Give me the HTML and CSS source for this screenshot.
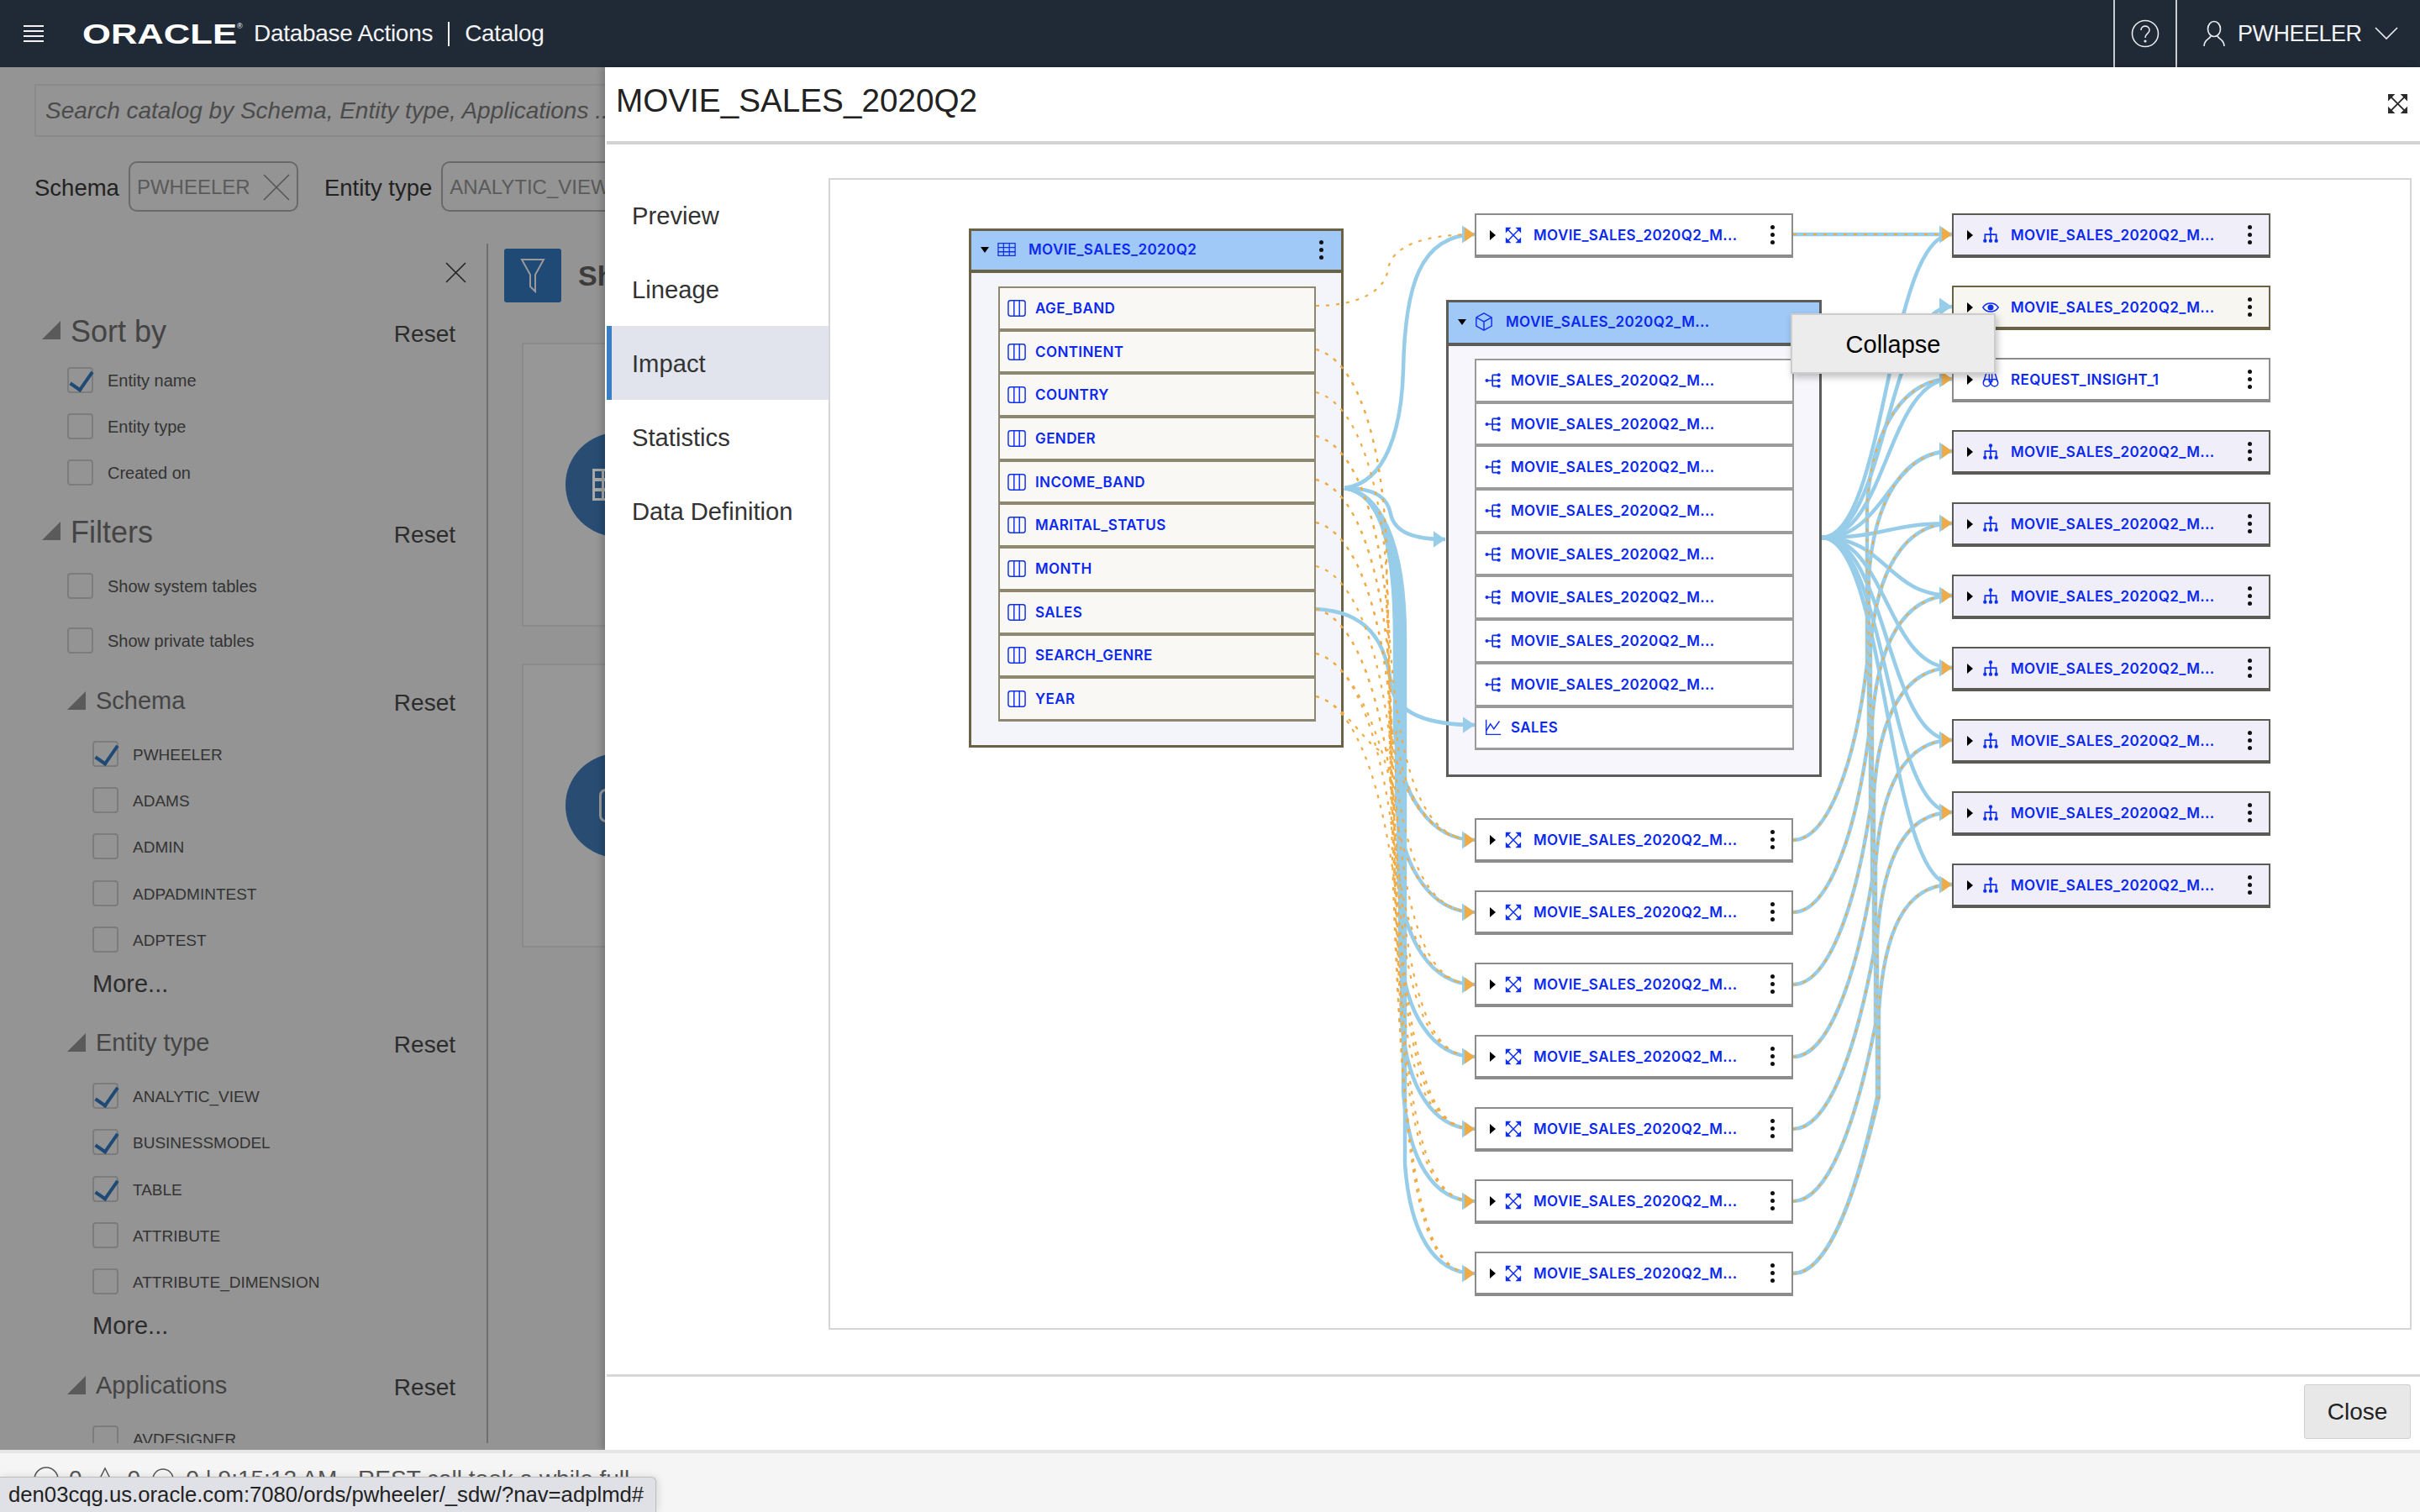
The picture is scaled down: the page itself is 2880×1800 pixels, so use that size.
FILE: index.html
```html
<!DOCTYPE html>
<html lang="en">
<head>
    <meta charset="UTF-8">
    <title>Database Actions | Catalog</title>
    <link rel="stylesheet" href="styles.css">
</head>
<body>
    <svg class="icon-defs" width="0" height="0">
        <symbol id="i-expand" viewBox="0 0 24 24">
            <path d="M4 4L20 20M20 4L4 20" fill="none" stroke="currentColor" stroke-width="1.8"/>
            <path d="M1 1h8L1 9zM23 1h-8l8 8zM1 23h8l-8-8zM23 23h-8l8-8z" fill="currentColor"/>
        </symbol>
        <symbol id="i-model" viewBox="0 0 24 24">
            <path d="M12 3V20M4 20V11H20V20" fill="none" stroke="currentColor" stroke-width="2"/>
            <circle cx="12" cy="3" r="2.6" fill="currentColor"/>
            <circle cx="4" cy="20" r="2.6" fill="currentColor"/>
            <circle cx="12" cy="20" r="2.6" fill="currentColor"/>
            <circle cx="20" cy="20" r="2.6" fill="currentColor"/>
        </symbol>
        <symbol id="i-tree" viewBox="0 0 24 24">
            <path d="M3 12H20M11 4V20M11 4H20M11 20H20" fill="none" stroke="currentColor" stroke-width="2"/>
            <circle cx="3" cy="12" r="2.4" fill="currentColor"/>
            <circle cx="20" cy="4" r="2.4" fill="currentColor"/>
            <circle cx="20" cy="12" r="2.4" fill="currentColor"/>
            <circle cx="20" cy="20" r="2.4" fill="currentColor"/>
        </symbol>
        <symbol id="i-eye" viewBox="0 0 24 24">
            <path d="M1 12C6 4 18 4 23 12C18 20 6 20 1 12Z" fill="none" stroke="currentColor" stroke-width="1.7"/>
            <circle cx="12" cy="12" r="4.2" fill="currentColor"/>
        </symbol>
        <symbol id="i-binoculars" viewBox="0 0 24 24">
            <circle cx="6.5" cy="16.5" r="5" fill="none" stroke="currentColor" stroke-width="1.8"/>
            <circle cx="17.5" cy="16.5" r="5" fill="none" stroke="currentColor" stroke-width="1.8"/>
            <path d="M2 15L6 2M22 15L18 2M10 4V16M14 4V16M10 12H14" fill="none" stroke="currentColor" stroke-width="1.8"/>
        </symbol>
        <symbol id="i-chart" viewBox="0 0 24 24">
            <path d="M2 1V22H23" fill="none" stroke="currentColor" stroke-width="1.7"/>
            <path d="M2 17L8 7L13 14L21 3" fill="none" stroke="currentColor" stroke-width="1.7"/>
        </symbol>
        <symbol id="i-cube" viewBox="0 0 24 24">
            <path d="M12 1L22 6.5V17.5L12 23L2 17.5V6.5ZM2 6.5L12 12L22 6.5M12 12V23" fill="none" stroke="currentColor" stroke-width="1.6"/>
        </symbol>
        <symbol id="i-table" viewBox="0 0 24 24">
            <path d="M1 4H23V20H1ZM1 9.5H23M1 15H23M8 4V20M15.500 4V20" fill="none" stroke="currentColor" stroke-width="1.4"/>
        </symbol>
        <symbol id="i-column" viewBox="0 0 24 24">
            <rect x="1" y="2" width="22" height="20" rx="3" fill="none" stroke="currentColor" stroke-width="1.6"/>
            <path d="M8.500 2V22M15.500 2V22" fill="none" stroke="currentColor" stroke-width="1.6"/>
        </symbol>
    </svg>

    <header class="topbar">
        <div class="hamburger"><i></i><i></i><i></i><i></i></div>
        <svg class="logo" width="192" height="32" viewBox="0 0 192 32">
            <text x="0" y="28" textLength="184" lengthAdjust="spacingAndGlyphs">ORACLE</text>
            <text class="logo-mark" x="184" y="10">®</text>
        </svg>
        <span class="app-name">Database Actions</span>
        <span class="app-sep"></span>
        <span class="app-name">Catalog</span>
        <div class="top-actions">
            <div class="help-cell">
                <svg width="34" height="34" viewBox="0 0 34 34" fill="none" stroke="#e8eaed" stroke-width="1.6">
                    <circle cx="17" cy="17" r="15.500"/>
                    <path d="M12 13C12 6.500 22 6.500 22 13C22 17 17 17 17 22"/>
                    <circle cx="17" cy="26" r="0.800"/>
                </svg>
            </div>
            <div class="user-cell">
                <svg width="28" height="32" viewBox="0 0 28 32" fill="none" stroke="#e8eaed" stroke-width="1.7">
                    <ellipse cx="14" cy="10.500" rx="7.500" ry="9"/>
                    <path d="M10 19C8 23 2 23 2 31M18 19C20 23 26 23 26 31"/>
                </svg>
                <span>PWHEELER</span>
                <svg width="28" height="16" viewBox="0 0 28 16" fill="none" stroke="#e8eaed" stroke-width="1.7">
                    <path d="M1 1L14 14L27 1"/>
                </svg>
            </div>
        </div>
    </header>

    <div class="workspace">
        <section class="catalog">
            <div class="search">Search catalog by Schema, Entity type, Applications ...</div>
            <div class="facets">
                <span class="facet-label">Schema</span>
                <span class="chip chip-schema">PWHEELER
                    <svg width="32" height="32" viewBox="0 0 32 32" fill="none" stroke="#555" stroke-width="1.6"><path d="M1 1L31 31M31 1L1 31"/></svg>
                </span>
                <span class="facet-label facet-second">Entity type</span>
                <span class="chip chip-entity">ANALYTIC_VIEW</span>
            </div>
            <div class="split">
                <aside class="sidebar">
                    <div class="close-row">
                        <svg width="25" height="25" viewBox="0 0 25 25" fill="none" stroke="#222" stroke-width="1.6"><path d="M1 1L24 24M24 1L1 24"/></svg>
                    </div>

                    <div class="group-head"><span class="tri"></span><h2>Sort by</h2><a>Reset</a></div>
                    <div class="checks">
                        <label class="check"><span class="box on"></span>Entity name</label>
                        <label class="check"><span class="box"></span>Entity type</label>
                        <label class="check"><span class="box"></span>Created on</label>
                    </div>

                    <div class="group-head filters-head"><span class="tri"></span><h2>Filters</h2><a>Reset</a></div>
                    <div class="checks checks-wide">
                        <label class="check"><span class="box"></span>Show system tables</label>
                        <label class="check"><span class="box"></span>Show private tables</label>
                    </div>

                    <div class="group-head sub schema-head"><span class="tri"></span><h3>Schema</h3><a>Reset</a></div>
                    <div class="checks sub-checks">
                        <label class="check"><span class="box on"></span>PWHEELER</label>
                        <label class="check"><span class="box"></span>ADAMS</label>
                        <label class="check"><span class="box"></span>ADMIN</label>
                        <label class="check"><span class="box"></span>ADPADMINTEST</label>
                        <label class="check"><span class="box"></span>ADPTEST</label>
                    </div>
                    <div class="more">More...</div>

                    <div class="group-head sub"><span class="tri"></span><h3>Entity type</h3><a>Reset</a></div>
                    <div class="checks sub-checks">
                        <label class="check"><span class="box on"></span>ANALYTIC_VIEW</label>
                        <label class="check"><span class="box on"></span>BUSINESSMODEL</label>
                        <label class="check"><span class="box on"></span>TABLE</label>
                        <label class="check"><span class="box"></span>ATTRIBUTE</label>
                        <label class="check"><span class="box"></span>ATTRIBUTE_DIMENSION</label>
                    </div>
                    <div class="more">More...</div>

                    <div class="group-head sub"><span class="tri"></span><h3>Applications</h3><a>Reset</a></div>
                    <div class="checks sub-checks">
                        <label class="check"><span class="box"></span>AVDESIGNER</label>
                    </div>
                </aside>
                <div class="results">
                    <div class="results-bar">
                        <div class="filter-btn">
                            <svg width="30" height="42" viewBox="0 0 30 42" fill="none" stroke="#9a9a9a" stroke-width="2"><path d="M2 2H28L18 20V40L12 34V20Z"/></svg>
                        </div>
                        <span class="results-title">Showing</span>
                    </div>
                    <div class="card">
                        <div class="card-circle"><span class="card-grid"><i></i><i></i><i></i></span></div>
                    </div>
                    <div class="card">
                        <div class="card-circle"><span class="card-can"></span></div>
                    </div>
                </div>
            </div>
        </section>

        <section class="modal">
            <div class="modal-head">
                <h1>MOVIE_SALES_2020Q2</h1>
                <svg class="modal-expand"><use href="#i-expand"/></svg>
            </div>
            <div class="modal-body">
                <nav class="tabs">
                    <a>Preview</a>
                    <a>Lineage</a>
                    <a class="active">Impact</a>
                    <a>Statistics</a>
                    <a>Data Definition</a>
                </nav>
                <div class="frame">
                    <div class="graph">
                        <div class="group group-table">
                            <div class="group-title">
                                <span class="caret-down"></span>
                                <svg class="ico ico-wide"><use href="#i-table"/></svg>
                                <span class="node-name">MOVIE_SALES_2020Q2</span>
                                <span class="kebab"></span>
                            </div>
                            <div class="group-rows">
                                <div class="row"><svg class="ico ico-wide"><use href="#i-column"/></svg><span class="node-name">AGE_BAND</span></div>
                                <div class="row"><svg class="ico ico-wide"><use href="#i-column"/></svg><span class="node-name">CONTINENT</span></div>
                                <div class="row"><svg class="ico ico-wide"><use href="#i-column"/></svg><span class="node-name">COUNTRY</span></div>
                                <div class="row"><svg class="ico ico-wide"><use href="#i-column"/></svg><span class="node-name">GENDER</span></div>
                                <div class="row"><svg class="ico ico-wide"><use href="#i-column"/></svg><span class="node-name">INCOME_BAND</span></div>
                                <div class="row"><svg class="ico ico-wide"><use href="#i-column"/></svg><span class="node-name">MARITAL_STATUS</span></div>
                                <div class="row"><svg class="ico ico-wide"><use href="#i-column"/></svg><span class="node-name">MONTH</span></div>
                                <div class="row"><svg class="ico ico-wide"><use href="#i-column"/></svg><span class="node-name">SALES</span></div>
                                <div class="row"><svg class="ico ico-wide"><use href="#i-column"/></svg><span class="node-name">SEARCH_GENRE</span></div>
                                <div class="row"><svg class="ico ico-wide"><use href="#i-column"/></svg><span class="node-name">YEAR</span></div>
                            </div>
                        </div>

                        <div class="lane lane-top">
                            <div class="node"><span class="caret"></span><svg class="ico"><use href="#i-expand"/></svg><span class="node-name">MOVIE_SALES_2020Q2_M...</span><span class="kebab"></span></div>
                        </div>

                        <div class="group group-view">
                            <div class="group-title">
                                <span class="caret-down"></span>
                                <svg class="ico ico-wide"><use href="#i-cube"/></svg>
                                <span class="node-name">MOVIE_SALES_2020Q2_M...</span>
                            </div>
                            <div class="group-rows">
                                <div class="row"><svg class="ico"><use href="#i-tree"/></svg><span class="node-name">MOVIE_SALES_2020Q2_M...</span></div>
                                <div class="row"><svg class="ico"><use href="#i-tree"/></svg><span class="node-name">MOVIE_SALES_2020Q2_M...</span></div>
                                <div class="row"><svg class="ico"><use href="#i-tree"/></svg><span class="node-name">MOVIE_SALES_2020Q2_M...</span></div>
                                <div class="row"><svg class="ico"><use href="#i-tree"/></svg><span class="node-name">MOVIE_SALES_2020Q2_M...</span></div>
                                <div class="row"><svg class="ico"><use href="#i-tree"/></svg><span class="node-name">MOVIE_SALES_2020Q2_M...</span></div>
                                <div class="row"><svg class="ico"><use href="#i-tree"/></svg><span class="node-name">MOVIE_SALES_2020Q2_M...</span></div>
                                <div class="row"><svg class="ico"><use href="#i-tree"/></svg><span class="node-name">MOVIE_SALES_2020Q2_M...</span></div>
                                <div class="row"><svg class="ico"><use href="#i-tree"/></svg><span class="node-name">MOVIE_SALES_2020Q2_M...</span></div>
                                <div class="row"><svg class="ico"><use href="#i-chart"/></svg><span class="node-name">SALES</span></div>
                            </div>
                        </div>

                        <div class="lane lane-middle">
                            <div class="node"><span class="caret"></span><svg class="ico"><use href="#i-expand"/></svg><span class="node-name">MOVIE_SALES_2020Q2_M...</span><span class="kebab"></span></div>
                            <div class="node"><span class="caret"></span><svg class="ico"><use href="#i-expand"/></svg><span class="node-name">MOVIE_SALES_2020Q2_M...</span><span class="kebab"></span></div>
                            <div class="node"><span class="caret"></span><svg class="ico"><use href="#i-expand"/></svg><span class="node-name">MOVIE_SALES_2020Q2_M...</span><span class="kebab"></span></div>
                            <div class="node"><span class="caret"></span><svg class="ico"><use href="#i-expand"/></svg><span class="node-name">MOVIE_SALES_2020Q2_M...</span><span class="kebab"></span></div>
                            <div class="node"><span class="caret"></span><svg class="ico"><use href="#i-expand"/></svg><span class="node-name">MOVIE_SALES_2020Q2_M...</span><span class="kebab"></span></div>
                            <div class="node"><span class="caret"></span><svg class="ico"><use href="#i-expand"/></svg><span class="node-name">MOVIE_SALES_2020Q2_M...</span><span class="kebab"></span></div>
                            <div class="node"><span class="caret"></span><svg class="ico"><use href="#i-expand"/></svg><span class="node-name">MOVIE_SALES_2020Q2_M...</span><span class="kebab"></span></div>
                        </div>

                        <div class="lane lane-right">
                            <div class="node node-model"><span class="caret"></span><svg class="ico"><use href="#i-model"/></svg><span class="node-name">MOVIE_SALES_2020Q2_M...</span><span class="kebab"></span></div>
                            <div class="node node-source"><span class="caret"></span><svg class="ico"><use href="#i-eye"/></svg><span class="node-name">MOVIE_SALES_2020Q2_M...</span><span class="kebab"></span></div>
                            <div class="node"><span class="caret"></span><svg class="ico"><use href="#i-binoculars"/></svg><span class="node-name">REQUEST_INSIGHT_1</span><span class="kebab"></span></div>
                            <div class="node node-model"><span class="caret"></span><svg class="ico"><use href="#i-model"/></svg><span class="node-name">MOVIE_SALES_2020Q2_M...</span><span class="kebab"></span></div>
                            <div class="node node-model"><span class="caret"></span><svg class="ico"><use href="#i-model"/></svg><span class="node-name">MOVIE_SALES_2020Q2_M...</span><span class="kebab"></span></div>
                            <div class="node node-model"><span class="caret"></span><svg class="ico"><use href="#i-model"/></svg><span class="node-name">MOVIE_SALES_2020Q2_M...</span><span class="kebab"></span></div>
                            <div class="node node-model"><span class="caret"></span><svg class="ico"><use href="#i-model"/></svg><span class="node-name">MOVIE_SALES_2020Q2_M...</span><span class="kebab"></span></div>
                            <div class="node node-model"><span class="caret"></span><svg class="ico"><use href="#i-model"/></svg><span class="node-name">MOVIE_SALES_2020Q2_M...</span><span class="kebab"></span></div>
                            <div class="node node-model"><span class="caret"></span><svg class="ico"><use href="#i-model"/></svg><span class="node-name">MOVIE_SALES_2020Q2_M...</span><span class="kebab"></span></div>
                            <div class="node node-model"><span class="caret"></span><svg class="ico"><use href="#i-model"/></svg><span class="node-name">MOVIE_SALES_2020Q2_M...</span><span class="kebab"></span></div>
                        </div>

                        <svg class="edges" id="edges" viewBox="988 214 1880 1367"></svg>
                        <div class="hover-tip">Collapse</div>
                    </div>
                </div>
            </div>
            <div class="modal-foot">
                <button class="close-btn">Close</button>
            </div>
        </section>
    </div>

    <footer class="statusbar">
        <div class="status-line">
            <svg width="30" height="30" viewBox="0 0 30 30" fill="none" stroke="#555" stroke-width="1.500"><circle cx="15" cy="15" r="14"/></svg>
            <span>0</span>
            <svg width="30" height="30" viewBox="0 0 30 30" fill="none" stroke="#555" stroke-width="1.500"><path d="M15 2L28 28H2Z"/></svg>
            <span>0</span>
            <svg width="30" height="30" viewBox="0 0 30 30" fill="none" stroke="#555" stroke-width="1.500"><circle cx="15" cy="15" r="12"/></svg>
            <span>0 | 9:15:12 AM - REST call took a while full</span>
        </div>
        <div class="link-preview">den03cqg.us.oracle.com:7080/ords/pwheeler/_sdw/?nav=adplmd#</div>
    </footer>

    <script src="graph.js"></script>
</body>
</html>
```

FILE: styles.css
```css
* {
    box-sizing: border-box;
}
html, body {
    margin: 0;
    height: 100%;
}
body {
    height: 1800px;
    display: flex;
    flex-direction: column;
    overflow: hidden;
    font-family: "Liberation Sans", Arial, sans-serif;
    color: #222;
    background: #fff;
}
.icon-defs {
    position: absolute;
}

/* top bar */
.topbar {
    height: 80px;
    flex: none;
    display: flex;
    align-items: center;
    background: #202936;
    color: #f2f3f4;
    padding-left: 28px;
}
.hamburger {
    width: 24px;
    height: 21px;
    display: flex;
    flex-direction: column;
    justify-content: space-between;
    margin-right: 46px;
}
.hamburger i {
    display: block;
    height: 2px;
    background: #f2f3f4;
}
.logo {
    margin-right: 12px;
}
.logo text {
    font-family: "Liberation Sans", sans-serif;
    font-weight: 700;
    font-size: 34px;
    fill: #fff;
}
.logo .logo-mark {
    font-size: 9px;
    font-weight: 400;
}
.app-name {
    font-size: 28px;
    letter-spacing: -0.3px;
}
.app-sep {
    width: 2px;
    height: 29px;
    margin: 0 18px;
    background: #f2f3f4;
}
.top-actions {
    margin-left: auto;
    height: 100%;
    display: flex;
}
.help-cell {
    width: 74px;
    display: flex;
    align-items: center;
    justify-content: center;
    border-left: 2px solid #c9ccd0;
}
.user-cell {
    width: 291px;
    display: flex;
    align-items: center;
    padding-left: 30px;
    font-size: 27px;
    border-left: 2px solid #c9ccd0;
}
.user-cell span {
    margin: 0 15px 0 14px;
    letter-spacing: -0.5px;
}

.workspace {
    flex: 1;
    display: flex;
    min-height: 0;
}

/* greyed catalog page behind the dialog */
.catalog {
    width: 720px;
    flex: none;
    overflow: hidden;
    background: #949494;
    display: flex;
    flex-direction: column;
}
.search {
    flex: none;
    width: 760px;
    height: 63px;
    margin: 20px 0 0 41px;
    padding-left: 11px;
    display: flex;
    align-items: center;
    border: 2px solid #8a8a8a;
    border-radius: 3px;
    font-size: 28px;
    font-style: italic;
    color: #4b4b4b;
    white-space: nowrap;
}
.facets {
    flex: none;
    height: 60px;
    margin: 29px 0 0 41px;
    display: flex;
    align-items: center;
}
.facet-label {
    padding-top: 3px;
    font-size: 27.500px;
    color: #222;
    white-space: nowrap;
}
.facet-second {
    margin: 0 11px 0 31px;
}
.chip {
    height: 60px;
    display: flex;
    align-items: center;
    justify-content: space-between;
    border: 2px solid #6a6a6a;
    border-radius: 10px;
    font-size: 24px;
    color: #5a5a5a;
    padding: 1px 8px 0;
    flex: none;
}
.chip-schema {
    width: 202px;
    margin-left: 11px;
}
.chip-entity {
    width: 300px;
    justify-content: flex-start;
}
.split {
    flex: none;
    height: 1428px;
    margin-top: 38px;
    display: flex;
}
.sidebar {
    width: 581px;
    flex: none;
    overflow: hidden;
    padding: 0 37px 0 50px;
    border-right: 2px solid #6f6f6f;
}
.close-row {
    height: 73px;
    padding-top: 22px;
    display: flex;
    justify-content: flex-end;
    margin-right: -13px;
}
.group-head {
    height: 60px;
    display: flex;
    align-items: center;
}
.group-head h2 {
    margin: 3px 0 0;
    font-size: 36px;
    font-weight: 400;
    color: #444;
}
.group-head h3 {
    margin: 1px 0 0;
    font-size: 29px;
    font-weight: 400;
    color: #444;
}
.group-head a {
    margin: 6px 0 0 auto;
    font-size: 28px;
    color: #2c2c2c;
}
.group-head h2 + a {
    margin-top: 9px;
}
.tri {
    width: 0;
    height: 0;
    margin: 0 12px 0 0;
    border-left: 22px solid transparent;
    border-bottom: 22px solid #5a5a5a;
}
.group-head.sub {
    margin-top: 15px;
    padding-left: 30px;
}
.filters-head {
    margin-top: 12px;
}
.group-head.schema-head {
    margin-top: 9px;
}
.checks {
    margin: 2px 0 0 30px;
}
.check {
    height: 55px;
    display: flex;
    align-items: center;
    padding-top: 2px;
    font-size: 20px;
    color: #333;
}
.checks-wide {
    margin-top: 3px;
}
.checks-wide .check {
    height: 65px;
}
.sub-checks {
    margin: 6px 0 0 60px;
}
.sub-checks .check {
    height: 55.300px;
    font-size: 19px;
}
.box {
    width: 31px;
    height: 31px;
    margin: -3px 17px 0 0;
    flex: none;
    position: relative;
    border: 2px solid #7c7c7c;
    border-radius: 4px;
}
.box.on::after {
    content: "";
    position: absolute;
    left: 7px;
    top: -2px;
    width: 12px;
    height: 24px;
    border: solid #1f4a75;
    border-width: 0 4px 4px 0;
    transform: rotate(35deg);
}
.more {
    height: 50px;
    margin: 0 0 0 60px;
    display: flex;
    align-items: center;
    font-size: 29px;
    color: #2c2c2c;
}
.results {
    flex: 1;
    padding-top: 6px;
    padding-left: 19px;
    min-width: 0;
}
.results-bar {
    height: 64px;
    display: flex;
    align-items: center;
    gap: 20px;
}
.filter-btn {
    width: 68px;
    height: 64px;
    flex: none;
    display: flex;
    align-items: center;
    justify-content: center;
    background: #1f4a75;
    border-radius: 3px;
}
.results-title {
    font-size: 34px;
    font-weight: 700;
    color: #3c3c3c;
}
.card {
    width: 500px;
    height: 338px;
    margin: 48px 0 44px 21px;
    display: flex;
    align-items: center;
    padding-left: 50px;
    background: #979797;
    border: 2px solid #8b8b8b;
}
.card + .card {
    margin-top: 0;
}
.card-circle {
    width: 124px;
    height: 124px;
    flex: none;
    display: flex;
    align-items: center;
    padding-left: 32px;
    border-radius: 50%;
    background: #284c72;
}
.card-grid {
    width: 40px;
    height: 38px;
    display: flex;
    flex-direction: column;
    justify-content: space-between;
    background: #a8a8a8;
    padding: 3px;
}
.card-grid i {
    display: block;
    height: 8px;
    background: repeating-linear-gradient(to right, #284c72 0 8px, #a8a8a8 8px 11px);
}
.card-can {
    width: 44px;
    height: 40px;
    margin-left: 8px;
    border: 3px solid #9a9a9a;
    border-radius: 8px;
}

/* dialog */
.modal {
    flex: 1;
    min-width: 0;
    display: flex;
    flex-direction: column;
    padding-left: 2px;
    background: #fff;
    box-shadow: -4px 0 8px rgba(0, 0, 0, 0.18);
    position: relative;
}
.modal-head {
    height: 92px;
    flex: none;
    display: flex;
    align-items: center;
    justify-content: space-between;
    padding: 0 14px 8px 11px;
    border-bottom: 4px solid #d3d3d3;
}
.modal-head h1 {
    margin: 0;
    font-size: 38.700px;
    font-weight: 400;
    color: #222;
}
.modal-expand {
    width: 25px;
    height: 25px;
    margin-top: 6px;
    color: #2a2a2a;
}
.modal-body {
    flex: 1;
    display: flex;
    min-height: 0;
}
.tabs {
    width: 264px;
    flex: none;
    padding-top: 40px;
}
.tabs a {
    height: 88px;
    display: flex;
    align-items: center;
    padding: 3px 0 0 30px;
    font-size: 29.200px;
    color: #333;
}
.tabs a.active {
    padding-left: 24px;
    background: #e1e4ec;
    border-left: 6px solid #3a7ec6;
}
.frame {
    flex: none;
    width: 1884px;
    height: 1371px;
    margin-top: 40px;
    border: 2px solid #d6d6d6;
    background: #fff;
}
.graph {
    position: relative;
    width: 100%;
    height: 100%;
}

/* graph nodes, placed on the canvas */
.group, .lane, .edges, .hover-tip {
    position: absolute;
}
.group {
    display: flex;
    flex-direction: column;
    border: 3px solid;
}
.group-table {
    left: 165px;
    top: 58px;
    width: 446px;
    height: 618px;
    border-color: #6b6245;
    background: #f3f5fa;
}
.group-view {
    left: 733px;
    top: 143px;
    width: 447px;
    height: 568px;
    border-color: #5c5c58;
    background: #f6f6fc;
}
.group-title {
    height: 50px;
    flex: none;
    display: flex;
    align-items: center;
    padding: 0 11px 2px;
    background: #a0c9f8;
    border-bottom: 4px solid;
    border-color: inherit;
}
.group-view .group-title {
    height: 52px;
}
.caret-down {
    width: 0;
    height: 0;
    margin-right: 10px;
    border: 5.500px solid transparent;
    border-top: 7px solid #000;
    border-bottom: 0;
}
.group-title .ico {
    margin-right: 15px;
}
.group-title .kebab {
    margin-right: 10px;
}
.group-rows {
    margin: 16px 30px 0 32px;
    display: grid;
    grid-auto-rows: 51.700px;
}
.group-view .group-rows {
    margin: 15px 30px 0 31px;
}
.row {
    display: flex;
    align-items: center;
    padding-left: 9px;
    background: #faf8f5;
    border: 2px solid #8f8870;
    border-bottom-width: 3px;
    margin-bottom: -1px;
}
.row .ico {
    margin-right: 11px;
}
.group-view .row {
    padding-left: 10px;
    background: #fff;
    border-color: #9b9b9b;
}
.lane {
    display: flex;
    flex-direction: column;
    gap: 33px;
    width: 379px;
}
.lane-top {
    left: 767px;
    top: 40px;
}
.lane-middle {
    left: 767px;
    top: 760px;
}
.lane-right {
    left: 1335px;
    top: 40px;
}
.node {
    height: 53px;
    flex: none;
    display: flex;
    align-items: center;
    padding: 0 20px 0 16px;
    background: #fff;
    border: 2px solid #8c8c8c;
    border-bottom-width: 4px;
}
.node-model {
    background: #f0eef8;
    border-color: #5b5a55;
}
.node-source {
    background: #f7f6f0;
    border-color: #6b6245;
}
.caret {
    width: 0;
    height: 0;
    margin-right: 11px;
    border-left: 7px solid #000;
    border-top: 6px solid transparent;
    border-bottom: 6px solid transparent;
}
.ico {
    width: 20px;
    height: 20px;
    flex: none;
    margin-right: 14px;
    color: #1030f0;
}
.ico-wide {
    width: 22px;
    height: 22px;
}
.node-name {
    font-family: Inter, "Liberation Sans", sans-serif;
    font-size: 17px;
    font-weight: 600;
    letter-spacing: 0.4px;
    color: #0a28f0;
    white-space: nowrap;
}
.kebab {
    width: 5px;
    height: 5px;
    margin-left: auto;
    border-radius: 50%;
    background: #111;
    box-shadow: 0 -9px 0 #111, 0 9px 0 #111;
    flex: none;
}
.edges {
    left: 0;
    top: 0;
    width: 100%;
    height: 100%;
    pointer-events: none;
}
.edges path {
    fill: none;
}
.edge-blue {
    stroke: #97cde8;
    stroke-width: 4.500;
}
.edge-dots {
    stroke: #f0ab45;
    stroke-width: 2.200;
    stroke-dasharray: 4 8;
}
.head-blue {
    fill: #97cde8;
}
.head-dots {
    fill: #f0ab45;
}
.hover-tip {
    left: 1143px;
    top: 159px;
    width: 244px;
    height: 72px;
    padding-top: 2px;
    display: flex;
    align-items: center;
    justify-content: center;
    font-size: 29px;
    color: #000;
    background: #ececec;
    border: 2px solid #cdcdcd;
    box-shadow: 2px 4px 8px rgba(0, 0, 0, 0.25);
}
.modal-foot {
    height: 90px;
    flex: none;
    display: flex;
    justify-content: flex-end;
    align-items: flex-start;
    padding: 9px 11px 0 0;
    border-top: 3px solid #d8d8d8;
}
.close-btn {
    width: 127px;
    height: 65px;
    font-family: inherit;
    font-size: 28px;
    color: #222;
    background: #e8e8e8;
    border: 1px solid #cfcfcf;
    border-radius: 3px;
}

/* bottom bar */
.statusbar {
    height: 74px;
    flex: none;
    position: relative;
    overflow: hidden;
    background: #f5f5f5;
    border-top: 4px solid #e6e6e6;
}
.status-line {
    display: flex;
    align-items: center;
    gap: 12px;
    padding: 15px 0 0 40px;
    font-size: 28px;
    color: #555;
}
.link-preview {
    position: absolute;
    left: 0;
    bottom: 0;
    width: 781px;
    height: 42px;
    padding-left: 10px;
    display: flex;
    align-items: center;
    font-size: 25.700px;
    color: #222;
    white-space: nowrap;
    background: #dfe1e6;
    border: 1px solid #bdbdbd;
    border-left: 0;
    border-bottom: 0;
    border-top-right-radius: 6px;
    box-shadow: 2px 0 10px rgba(0, 0, 0, 0.12);
}
```

FILE: graph.js
```js
// draws the impact edges over the nodes, coordinates are page pixels (see viewBox)
const NS = 'http://www.w3.org/2000/svg';
const edges = document.getElementById('edges');

const middleY = [1000, 1086, 1172, 1258, 1344, 1430, 1516];
const rightY = [];
for (let i = 0; i < 10; i++) rightY.push(279 + i * 86);

function add(tag, cls, attr, val) {
    const el = document.createElementNS(NS, tag);
    el.setAttribute('class', cls);
    el.setAttribute(attr, val);
    edges.appendChild(el);
}

function line(d, cls) {
    add('path', cls, 'd', d);
}

function curve(x1, y1, x2, y2, cls) {
    const mid = (x1 + x2) / 2;
    line(`M${x1} ${y1}C${mid} ${y1} ${mid} ${y2} ${x2} ${y2}`, cls);
}

function head(x, y, cls, size) {
    add('polygon', cls, 'points', `${x - size} ${y - size * 0.7} ${x} ${y} ${x - size} ${y + size * 0.7}`);
}

// table to the analytic views and the model
line('M1600 581C1650 575 1668 510 1670 440C1672 340 1690 280 1755 279', 'edge-blue');
line('M1600 581C1640 581 1652 595 1655 612C1660 635 1685 642 1720 642', 'edge-blue');
line('M1566 725C1625 728 1650 760 1656 820C1665 850 1700 863 1755 863', 'edge-blue');
middleY.forEach((y, k) => {
    const vx = 1660 + k * 2;
    line(`M1600 581C1640 586 ${vx} 640 ${vx} 760L${vx} ${y - 130}C${vx + 6} ${y - 50} 1705 ${y} 1755 ${y}`, 'edge-blue');
});

// column level lineage, dotted
const rowY = [416, 467, 519, 571, 622, 674, 725, 778, 829];
line('M1566 364C1610 364 1648 350 1652 320C1656 295 1690 279 1755 279', 'edge-dots');
rowY.forEach((y, i) => {
    const vx = 1650 + i * 1.5;
    middleY.forEach((target, k) => {
        if ((i + k) % 4 !== 0) return;
        const bend = Math.min(y + 240, target - 130);
        line(`M1566 ${y}C1615 ${y + 12} 1646 ${y + 110} ${vx} ${bend}C${vx + 4} ${target - 60} 1700 ${target} 1755 ${target}`, 'edge-dots');
    });
});

// model to the right hand column
rightY.forEach(y => curve(2168, 640, 2323, y, 'edge-blue'));
line('M2134 279H2323', 'edge-blue');
line('M2134 279H2323', 'edge-dots');

// lower analytic views to the right hand column, blue with dots on top
function outLink(y, y2, vx) {
    const d = `M2134 ${y}C2175 ${y} 2208 ${y - 90} ${vx} ${y - 210}L${vx} ${y2 + 150}C${vx + 6} ${y2 + 60} 2265 ${y2} 2323 ${y2}`;
    line(d, 'edge-blue');
    line(d, 'edge-dots');
}
middleY.forEach((y, k) => outLink(y, rightY[k + 2], 2222 + k * 2));
outLink(1516, rightY[9], 2236);

// arrow heads
head(1720, 642, 'head-blue', 14);
head(1755, 863, 'head-blue', 14);
head(1755, 279, 'head-blue', 15);
head(1755, 279, 'head-dots', 12);
middleY.forEach(y => {
    head(1755, y, 'head-blue', 15);
    head(1755, y, 'head-dots', 12);
});
rightY.forEach((y, i) => {
    head(2323, y, 'head-blue', 15);
    if (i !== 1) head(2323, y, 'head-dots', 12);
});
```
